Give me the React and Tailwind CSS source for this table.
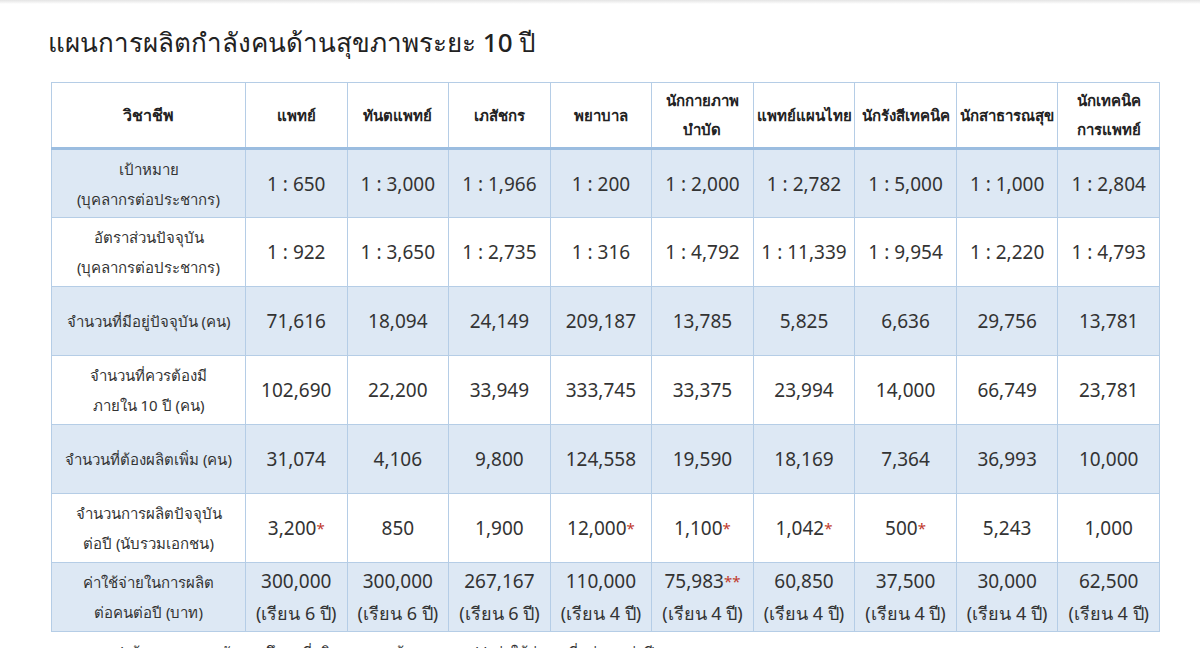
import React from 'react';

const HEADERS = [
  'แพทย์',
  'ทันตแพทย์',
  'เภสัชกร',
  'พยาบาล',
  ['นักกายภาพ', 'บำบัด'],
  'แพทย์แผนไทย',
  'นักรังสีเทคนิค',
  'นักสาธารณสุข',
  ['นักเทคนิค', 'การแพทย์'],
];

// star: '*' หรือ '**' แสดงเป็นสีแดงต่อท้ายตัวเลข
const ROWS = [
  {
    label: ['เป้าหมาย', '(บุคลากรต่อประชากร)'],
    values: ['1 : 650', '1 : 3,000', '1 : 1,966', '1 : 200', '1 : 2,000', '1 : 2,782', '1 : 5,000', '1 : 1,000', '1 : 2,804'],
  },
  {
    label: ['อัตราส่วนปัจจุบัน', '(บุคลากรต่อประชากร)'],
    values: ['1 : 922', '1 : 3,650', '1 : 2,735', '1 : 316', '1 : 4,792', '1 : 11,339', '1 : 9,954', '1 : 2,220', '1 : 4,793'],
  },
  {
    label: ['จำนวนที่มีอยู่ปัจจุบัน (คน)'],
    values: ['71,616', '18,094', '24,149', '209,187', '13,785', '5,825', '6,636', '29,756', '13,781'],
  },
  {
    label: ['จำนวนที่ควรต้องมี', 'ภายใน 10 ปี (คน)'],
    values: ['102,690', '22,200', '33,949', '333,745', '33,375', '23,994', '14,000', '66,749', '23,781'],
  },
  {
    label: ['จำนวนที่ต้องผลิตเพิ่ม (คน)'],
    values: ['31,074', '4,106', '9,800', '124,558', '19,590', '18,169', '7,364', '36,993', '10,000'],
  },
  {
    label: ['จำนวนการผลิตปัจจุบัน', 'ต่อปี (นับรวมเอกชน)'],
    values: [
      ['3,200', '*'], '850', '1,900', ['12,000', '*'], ['1,100', '*'], ['1,042', '*'], ['500', '*'], '5,243', '1,000',
    ],
  },
  {
    label: ['ค่าใช้จ่ายในการผลิต', 'ต่อคนต่อปี (บาท)'],
    values: [
      ['300,000', '', '(เรียน 6 ปี)'],
      ['300,000', '', '(เรียน 6 ปี)'],
      ['267,167', '', '(เรียน 6 ปี)'],
      ['110,000', '', '(เรียน 4 ปี)'],
      ['75,983', '**', '(เรียน 4 ปี)'],
      ['60,850', '', '(เรียน 4 ปี)'],
      ['37,500', '', '(เรียน 4 ปี)'],
      ['30,000', '', '(เรียน 4 ปี)'],
      ['62,500', '', '(เรียน 4 ปี)'],
    ],
  },
];

const Lines = ({ lines }) =>
  Array.isArray(lines) ? lines.map((l, i) => <div key={i}>{l}</div>) : lines;

const Value = ({ v }) => {
  if (!Array.isArray(v)) return v;
  const [num, star, sub] = v;
  return (
    <>
      <div>
        {num}
        {star && <span className="text-[#c0392b] text-[15px] align-top">{star}</span>}
      </div>
      {sub && <div className="text-[18px] leading-[32px]">{sub}</div>}
    </>
  );
};

export default function App() {
  return (
    <div
      className="w-[1200px] h-[648px] overflow-hidden bg-white text-[#333]"
      style={{ fontFamily: '"Noto Sans", Tahoma, sans-serif' }}
    >
      <div className="h-[4px] bg-gradient-to-b from-[#e4e4e4] to-white" />
      <h1 className="pl-[48px] pt-[20px] text-[26px] leading-[36px] font-medium text-[#222]">
        แผนการผลิตกำลังคนด้านสุขภาพระยะ 10 ปี
      </h1>

      <table className="ml-[51px] mt-[22px] w-[1109px] table-fixed border-collapse text-center">
        <colgroup>
          <col className="w-[194px]" />
          {HEADERS.map((_, i) => (
            <col key={i} />
          ))}
        </colgroup>
        <thead>
          <tr className="h-[66px] bg-white border-b-[3px] border-[#9bbde0]">
            <th className="border border-[#b5cde6] text-[16px] font-bold text-[#222]">วิชาชีพ</th>
            {HEADERS.map((h, i) => (
              <th
                key={i}
                className="border border-[#b5cde6] px-0 text-[15px] leading-[29px] font-semibold text-[#222] whitespace-nowrap"
              >
                <Lines lines={h} />
              </th>
            ))}
          </tr>
        </thead>
        <tbody>
          {ROWS.map((row, r) => (
            <tr key={r} className={`h-[69px] ${r % 2 === 0 ? 'bg-[#dde8f4]' : 'bg-white'}`}>
              <td className="border border-[#b5cde6] text-[15px] leading-[30px] text-[#333] whitespace-nowrap">
                <Lines lines={row.label} />
              </td>
              {row.values.map((v, i) => (
                <td
                  key={i}
                  className="border border-[#b5cde6] text-[19px] leading-[32px] text-[#333] whitespace-nowrap"
                >
                  <Value v={v} />
                </td>
              ))}
            </tr>
          ))}
        </tbody>
      </table>

      <p className="pl-[52px] mt-[8px] text-[15px] leading-[24px] text-[#333]">
        หมายเหตุ * ข้อมูลจากสถาบันการศึกษาที่ผลิตบุคลากรด้านสุขภาพ ** ค่าใช้จ่ายเฉลี่ยต่อคนต่อปี
      </p>
    </div>
  );
}
